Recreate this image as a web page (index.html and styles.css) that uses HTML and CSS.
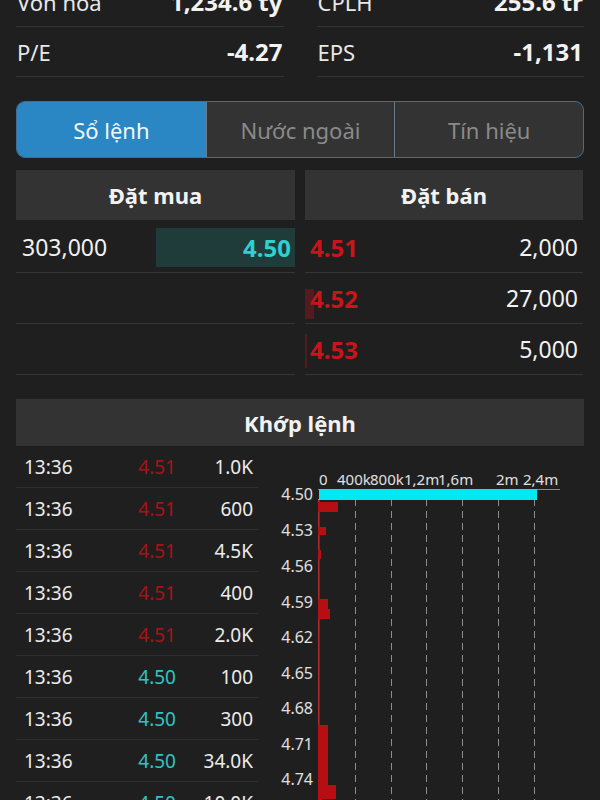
FILE: index.html
```html
<!DOCTYPE html>
<html lang="vi">
<head>
    <meta charset="UTF-8">
    <meta name="viewport" content="width=device-width, initial-scale=1.0">
    <title>Sổ lệnh</title>
    <link rel="stylesheet" href="styles.css">
</head>
<body>
    <div class="stats">
        <div class="stat"><span>Vốn hóa</span><b>1,234.6 tỷ</b></div>
        <div class="stat"><span>CPLH</span><b>255.6 tr</b></div>
        <div class="stat"><span>P/E</span><b>-4.27</b></div>
        <div class="stat"><span>EPS</span><b>-1,131</b></div>
    </div>

    <div class="tabs">
        <div class="tab active">Sổ lệnh</div>
        <div class="tab">Nước ngoài</div>
        <div class="tab">Tín hiệu</div>
    </div>

    <div class="book">
        <div class="side">
            <div class="head">Đặt mua</div>
            <div class="row buy">
                <span class="vol">303,000</span>
                <span class="bid">4.50</span>
            </div>
            <div class="row buy"></div>
            <div class="row buy"></div>
        </div>
        <div class="side">
            <div class="head">Đặt bán</div>
            <div class="row sell"><span class="ask">4.51</span><span class="vol">2,000</span></div>
            <div class="row sell"><span class="ask glow">4.52</span><span class="vol">27,000</span></div>
            <div class="row sell"><span class="ask thin">4.53</span><span class="vol">5,000</span></div>
        </div>
    </div>

    <div class="match-head">Khớp lệnh</div>
    <div class="match">
        <div class="trades">
            <div class="trade"><span>13:36</span><span class="down">4.51</span><span>1.0K</span></div>
            <div class="trade"><span>13:36</span><span class="down">4.51</span><span>600</span></div>
            <div class="trade"><span>13:36</span><span class="down">4.51</span><span>4.5K</span></div>
            <div class="trade"><span>13:36</span><span class="down">4.51</span><span>400</span></div>
            <div class="trade"><span>13:36</span><span class="down">4.51</span><span>2.0K</span></div>
            <div class="trade"><span>13:36</span><span class="up">4.50</span><span>100</span></div>
            <div class="trade"><span>13:36</span><span class="up">4.50</span><span>300</span></div>
            <div class="trade"><span>13:36</span><span class="up">4.50</span><span>34.0K</span></div>
            <div class="trade"><span>13:36</span><span class="up">4.50</span><span>10.0K</span></div>
        </div>
        <div class="chart">
            <svg width="325" height="360" viewBox="0 0 325 360">
                <g class="axis-text">
                    <text x="61" y="39">0</text>
                    <text x="79" y="39">400k</text>
                    <text x="112" y="39">800k</text>
                    <text x="146" y="39">1,2m</text>
                    <text x="180" y="39">1,6m</text>
                    <text x="238" y="39">2m</text>
                    <text x="265" y="39">2,4m</text>
                </g>
                <line x1="60" y1="43.5" x2="302" y2="43.5" stroke="#8a8a8a" stroke-width="1"/>
                <g stroke="#bdbdbd" stroke-width="1" stroke-dasharray="7 5" opacity="0.7">
                    <line x1="97.5" y1="53" x2="97.5" y2="360"/>
                    <line x1="133.5" y1="53" x2="133.5" y2="360"/>
                    <line x1="168.5" y1="53" x2="168.5" y2="360"/>
                    <line x1="204.5" y1="53" x2="204.5" y2="360"/>
                    <line x1="240.5" y1="53" x2="240.5" y2="360"/>
                    <line x1="276.5" y1="53" x2="276.5" y2="360"/>
                </g>
                <line x1="60.5" y1="53" x2="60.5" y2="360" stroke="#9a9a9a" stroke-width="1"/>
                <rect x="61" y="43" width="218" height="11" fill="#00e8f0"/>
                <g fill="#b50f14">
                    <rect x="60" y="54" width="2" height="306" opacity="0.8"/>
                    <rect x="60" y="56" width="20" height="10"/>
                    <rect x="60" y="81" width="8" height="8"/>
                    <rect x="60" y="104" width="3" height="9"/>
                    <rect x="60" y="153" width="10" height="10"/>
                    <rect x="60" y="163" width="12" height="10"/>
                    <rect x="60" y="279" width="10" height="60"/>
                    <rect x="60" y="339" width="18" height="14"/>
                    <rect x="60" y="353" width="4" height="7"/>
                </g>
                <g class="axis-text price-text" text-anchor="end">
                    <text x="55" y="54">4.50</text>
                    <text x="55" y="90">4.53</text>
                    <text x="55" y="126">4.56</text>
                    <text x="55" y="162">4.59</text>
                    <text x="55" y="197">4.62</text>
                    <text x="55" y="233">4.65</text>
                    <text x="55" y="268">4.68</text>
                    <text x="55" y="304">4.71</text>
                    <text x="55" y="339">4.74</text>
                </g>
            </svg>
        </div>
    </div>
</body>
</html>
```

FILE: styles.css
```css
body {
    margin: 0;
    background-color: #1f1f1f;
    color: #f2f2f2;
    font-family: "Noto Sans", Roboto, sans-serif;
    overflow: hidden;
}
.stats {
    display: grid;
    grid-template-columns: 1fr 1fr;
    column-gap: 33px;
    padding: 0 16px;
    margin-top: -23px;
}
.stat {
    display: flex;
    justify-content: space-between;
    align-items: center;
    height: 49px;
    border-bottom: 1px solid #333;
}
.stat span {
    padding-left: 1px;
    font-size: 22px;
    color: #e8e8e8;
}
.stat b {
    font-size: 24px;
    font-weight: 700;
    padding-right: 1px;
}
.tabs {
    display: grid;
    grid-template-columns: repeat(3, 1fr);
    margin: 24px 16px 0;
    height: 55px;
    border: 1px solid #3f6f93;
    border-radius: 9px;
    overflow: hidden;
    background-color: #333;
}
.tab {
    display: flex;
    align-items: center;
    justify-content: center;
    font-size: 22px;
    color: #8a8a8a;
    border-left: 1px solid #6a7a86;
}
.tab.active {
    background-color: #2b86c4;
    color: #f4f8fc;
    border-left: none;
}
.book {
    display: grid;
    grid-template-columns: 279px 278px;
    column-gap: 10px;
    margin: 12px 16px 0;
}
.head {
    height: 50px;
    margin-bottom: 2px;
    background-color: #333;
    display: flex;
    align-items: center;
    justify-content: center;
    font-size: 22px;
    font-weight: 700;
}
.row {
    display: flex;
    align-items: center;
    justify-content: space-between;
    height: 50px;
    border-bottom: 1px solid #353535;
    font-size: 23px;
    position: relative;
}
.row.buy .vol {
    padding-left: 6px;
}
.bid {
    width: 139px;
    height: 39px;
    box-sizing: border-box;
    padding-right: 4px;
    background-color: #1f3c3a;
    color: #2fd0d0;
    font-size: 24px;
    font-weight: 700;
    display: flex;
    align-items: center;
    justify-content: flex-end;
}
.row.sell {
    padding: 0 5px;
}
.ask {
    color: #c8141a;
    font-size: 24px;
    font-weight: 700;
}
.ask.glow::before {
    content: "";
    position: absolute;
    left: 0;
    top: 16px;
    width: 9px;
    height: 30px;
    background-color: rgba(180, 20, 25, 0.35);
}
.ask.thin::before {
    content: "";
    position: absolute;
    left: 0;
    top: 10px;
    width: 2px;
    height: 34px;
    background-color: rgba(180, 20, 25, 0.35);
}
.match-head {
    margin: 24px 16px 0;
    height: 47px;
    background-color: #333;
    display: flex;
    align-items: center;
    justify-content: center;
    font-size: 22px;
    font-weight: 700;
}
.match {
    display: flex;
    margin-left: 16px;
}
.trades {
    width: 242px;
    flex-shrink: 0;
}
.trade {
    display: grid;
    grid-template-columns: 92px 60px 77px;
    align-items: center;
    height: 41px;
    padding-left: 8px;
    border-bottom: 1px solid #2f2f2f;
    font-size: 19px;
    color: #ececec;
}
.trade span:nth-child(2),
.trade span:nth-child(3) {
    text-align: right;
}
.trade .down {
    color: #a81217;
}
.trade .up {
    color: #33c3c3;
}
.chart svg {
    display: block;
}
.axis-text {
    font-family: "Noto Sans", Roboto, sans-serif;
    font-size: 15px;
    fill: #e0e0e0;
}
.price-text {
    font-size: 16px;
}
```
